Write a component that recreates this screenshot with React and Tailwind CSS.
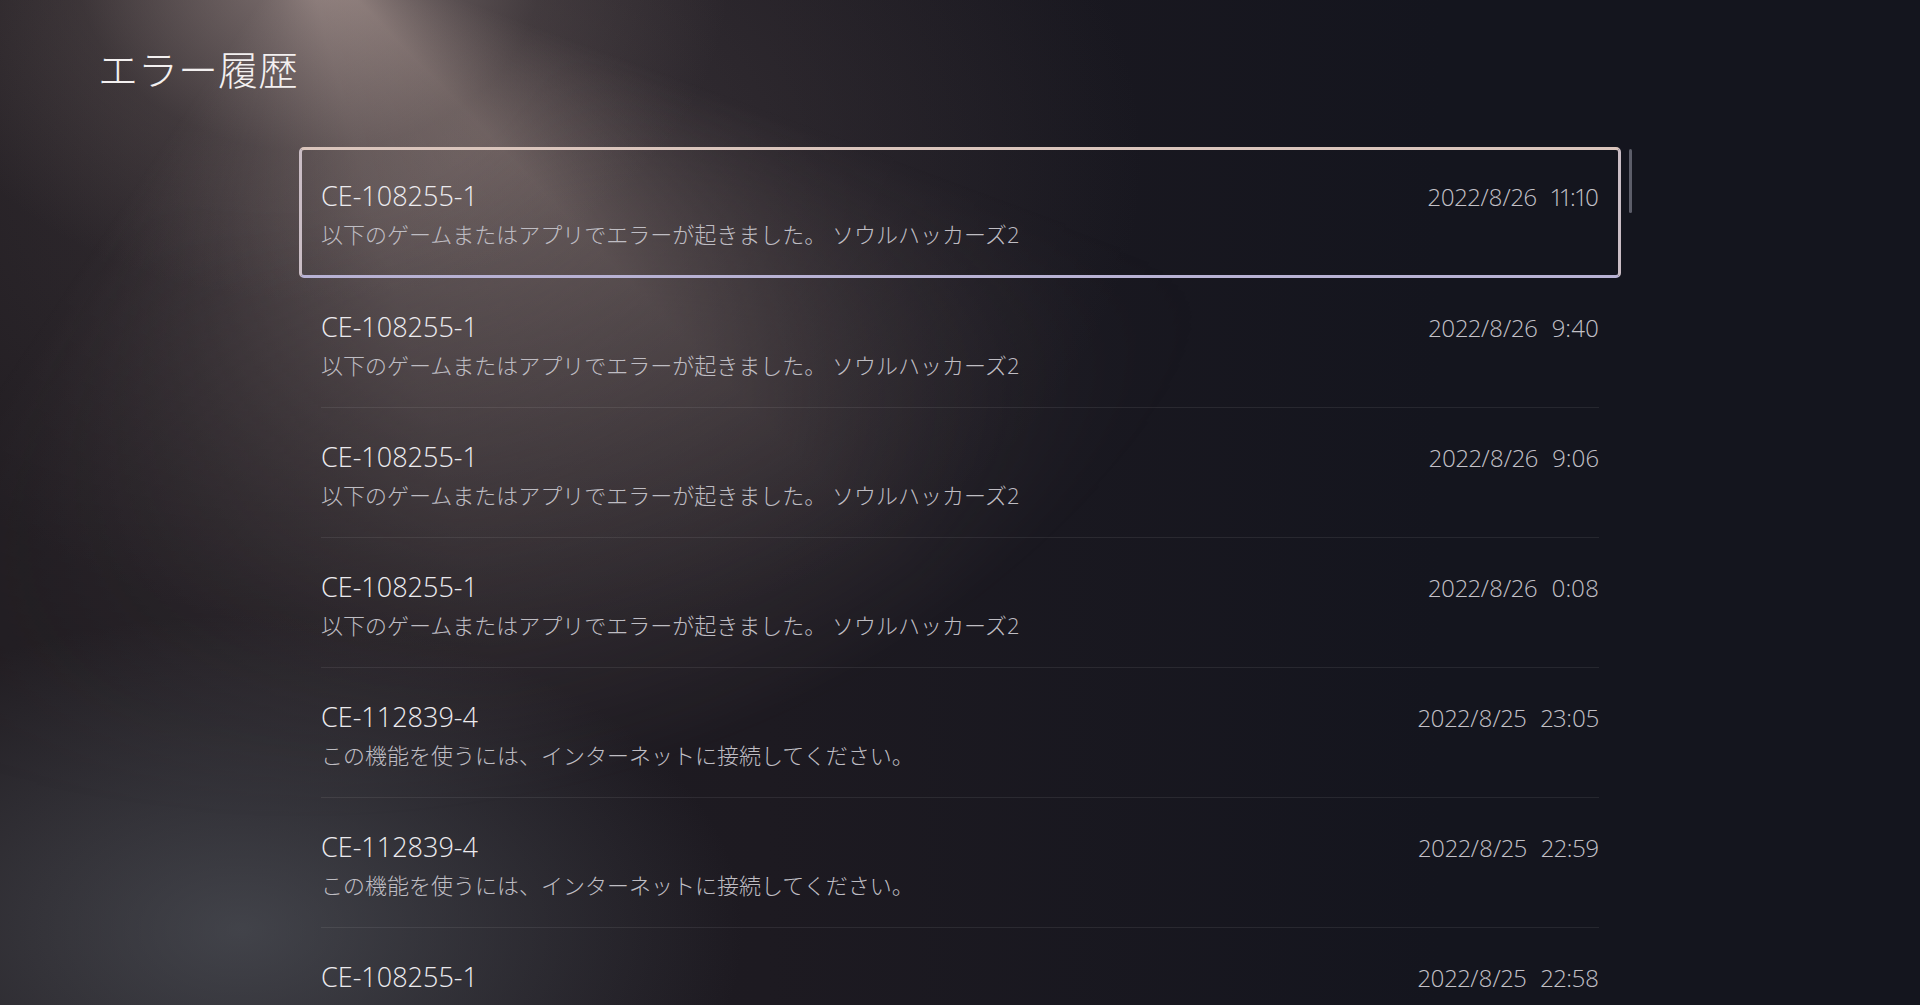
import React from 'react';

const MSG_APP = '以下のゲームまたはアプリでエラーが起きました。 ソウルハッカーズ2';
const MSG_NET = 'この機能を使うには、インターネットに接続してください。';

const errors = [
  { code: 'CE-108255-1', msg: MSG_APP, date: '2022/8/26', time: '11:10' },
  { code: 'CE-108255-1', msg: MSG_APP, date: '2022/8/26', time: '9:40' },
  { code: 'CE-108255-1', msg: MSG_APP, date: '2022/8/26', time: '9:06' },
  { code: 'CE-108255-1', msg: MSG_APP, date: '2022/8/26', time: '0:08' },
  { code: 'CE-112839-4', msg: MSG_NET, date: '2022/8/25', time: '23:05' },
  { code: 'CE-112839-4', msg: MSG_NET, date: '2022/8/25', time: '22:59' },
  { code: 'CE-108255-1', msg: MSG_APP, date: '2022/8/25', time: '22:58' },
];

function RowBody({ item }) {
  return (
    <>
      <div className="flex items-baseline justify-between">
        <span className="text-[27px] leading-[36px] font-light text-[#ecebef]">{item.code}</span>
        <span className="flex gap-[14px] text-[24px] font-light proportional-nums text-[#c3c1c8]">
          <span>{item.date}</span>
          <span>{item.time}</span>
        </span>
      </div>
      <p className="mt-[4px] text-[22px] leading-[30px] font-light text-[#bfbdc3]">{item.msg}</p>
    </>
  );
}

function ErrorRow({ item, selected }) {
  if (selected) {
    return (
      <div className="h-[131px] rounded-[5px] border-[3px] border-t-[#dac5bc] border-b-[#b8b2d4] border-x-[#cabdc5] px-[19px] pt-[28px]">
        <RowBody item={item} />
      </div>
    );
  }
  return (
    <div className="h-[130px] px-[22px]">
      <div className="h-full border-b border-white/[0.08] pt-[31px]">
        <RowBody item={item} />
      </div>
    </div>
  );
}

export default function App() {
  return (
    <div className="relative h-[1005px] w-full overflow-hidden bg-[#14151e] font-['Open_Sans','Noto_Sans_CJK_JP',sans-serif]">
      {/* backdrop lighting */}
      <div className="pointer-events-none absolute inset-0 bg-[linear-gradient(to_right,#201c21_0%,#1d1a21_40%,#14151e_75%)]" />
      <div className="pointer-events-none absolute inset-0 bg-[radial-gradient(ellipse_950px_680px_at_460px_160px,rgba(105,92,94,0.36),transparent_72%)]" />
      <div className="pointer-events-none absolute inset-0 bg-[conic-gradient(from_110deg_at_300px_-60px,transparent_0deg,rgba(170,150,144,0.45)_26deg,rgba(160,142,138,0.4)_55deg,rgba(125,112,112,0.2)_84deg,transparent_104deg,transparent_360deg)] [mask-image:radial-gradient(ellipse_1000px_820px_at_300px_0px,black_25%,transparent_100%)]" />
      <div className="pointer-events-none absolute inset-0 bg-[radial-gradient(ellipse_420px_330px_at_310px_-30px,rgba(185,165,160,0.6),rgba(130,115,112,0.22)_55%,transparent_100%)]" />
      <div className="pointer-events-none absolute inset-0 bg-[radial-gradient(ellipse_720px_450px_at_240px_930px,rgba(100,106,114,0.5),transparent_70%)]" />

      <div className="relative">
        <h1 className="pl-[98px] pt-[46px] text-[40px] leading-[48px] font-light text-[#f3f0f0]">エラー履歴</h1>

        <div className="mt-[53px] ml-[299px] flex">
          <div className="w-[1322px]">
            {errors.map((item, i) => (
              <ErrorRow key={i} item={item} selected={i === 0} />
            ))}
          </div>
          {/* scrollbar */}
          <div className="ml-[8px] pt-[2px]">
            <div className="h-[64px] w-[3px] rounded-full bg-[#5c5d69]" />
          </div>
        </div>
      </div>
    </div>
  );
}
